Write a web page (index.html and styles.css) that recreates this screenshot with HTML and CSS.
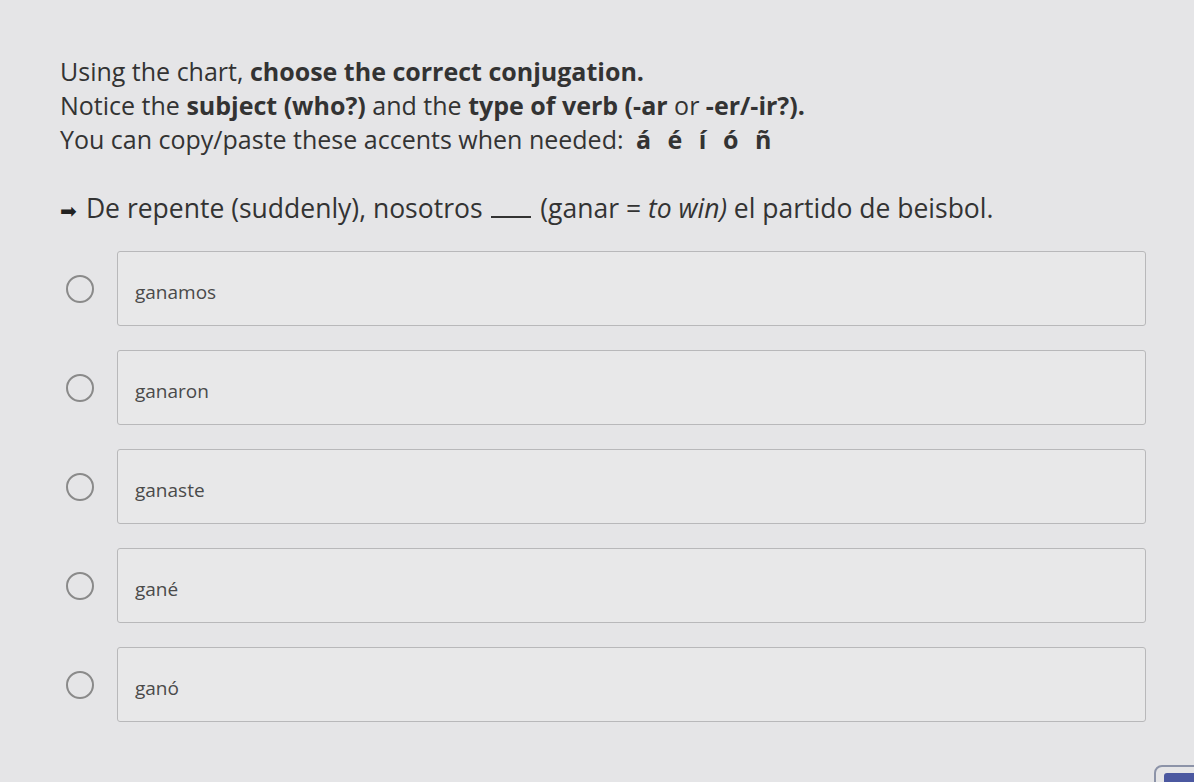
FILE: index.html
```html
<!DOCTYPE html>
<html lang="en">
<head>
<meta charset="utf-8">
<title>Conjugation</title>
<link rel="stylesheet" href="styles.css">
</head>
<body>
<div class="page">
  <div class="instructions">
    <p>Using the chart, <b>choose the correct conjugation.</b></p>
    <p>Notice the <b>subject (who?)</b> and the <b>type of verb (-ar</b> or <b>-er/-ir?).</b></p>
    <p>You can copy/paste these accents when needed: <b class="accents">á é í ó ñ</b></p>
  </div>
  <p class="question"><span class="arrow">➡</span> De repente (suddenly), nosotros <span class="blank"></span> (ganar = <i>to win)</i> el partido de beisbol.</p>
  <div class="options">
    <label class="option"><span class="radio"></span><span class="box">ganamos</span></label>
    <label class="option"><span class="radio"></span><span class="box">ganaron</span></label>
    <label class="option"><span class="radio"></span><span class="box">ganaste</span></label>
    <label class="option"><span class="radio"></span><span class="box">gané</span></label>
    <label class="option"><span class="radio"></span><span class="box">ganó</span></label>
  </div>
</div>
<div class="corner-btn"><span></span></div>
</body>
</html>
```
FILE: styles.css
```css
html, body {
  margin: 0;
  padding: 0;
  height: 100%;
}
body {
  background: #e5e5e7;
  font-family: "Open Sans", "Liberation Sans", sans-serif;
  color: #333;
  overflow: hidden;
}
.page {
  padding: 54px 48px 0 60px;
}
.instructions p {
  margin: 0;
  font-size: 25px;
  line-height: 34px;
  color: #333;
}
.instructions b {
  font-weight: 700;
}
.accents {
  letter-spacing: 5px;
  margin-left: 6px;
}
.question {
  margin: 35px 0 0 0;
  font-size: 26.5px;
  line-height: 34px;
  color: #333;
}
.arrow {
  font-size: 20px;
  margin-right: 2px;
  color: #222;
}
.blank {
  display: inline-block;
  width: 40px;
  border-bottom: 2px solid #333;
  margin: 0 2px;
  height: 18px;
}
.options {
  display: flex;
  flex-direction: column;
  gap: 24px;
  margin-top: 23px;
}
.option {
  display: flex;
  align-items: center;
}
.radio {
  width: 28px;
  height: 28px;
  border: 2px solid #8a8a8a;
  border-radius: 50%;
  box-sizing: border-box;
  margin-left: 6px;
  margin-right: 23px;
  flex: none;
}
.box {
  flex: 1;
  height: 75px;
  box-sizing: border-box;
  border: 1.5px solid #b8b8ba;
  border-radius: 3px;
  background: #e8e8e9;
  display: flex;
  align-items: center;
  padding-left: 17px;
  padding-top: 6px;
  font-size: 19px;
  color: #4a4a4a;
}
.corner-btn {
  position: fixed;
  left: 1154px;
  top: 765px;
  width: 60px;
  height: 40px;
  border: 2px solid #8c93a8;
  border-radius: 8px;
  box-sizing: border-box;
  padding: 6px 0 0 8px;
}
.corner-btn span {
  display: block;
  width: 60px;
  height: 20px;
  background: #4b58a0;
  border-radius: 3px;
}
```
